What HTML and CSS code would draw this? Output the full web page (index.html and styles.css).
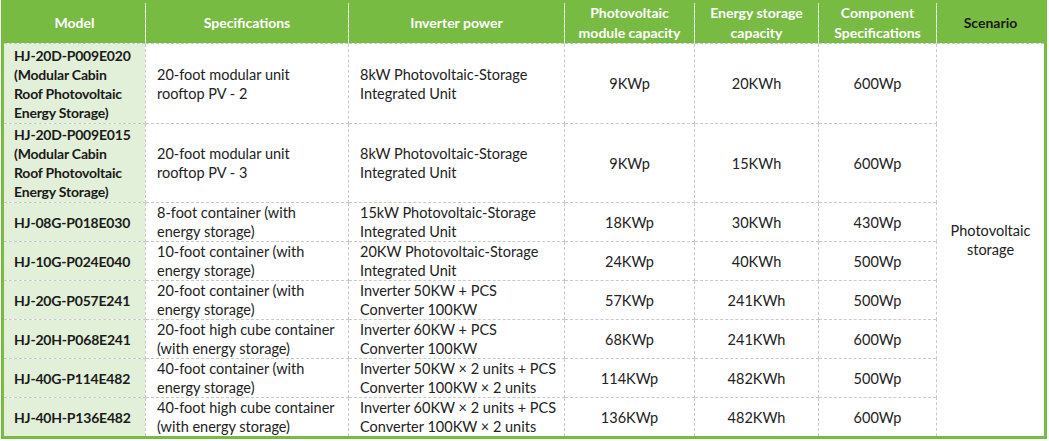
FILE: index.html
```html
<!DOCTYPE html>
<html>
<head>
<meta charset="utf-8">
<link rel="stylesheet" href="styles.css">
</head>
<body>
<table class="spec">
  <colgroup>
    <col class="c-model">
    <col class="c-spec">
    <col class="c-inv">
    <col class="c-pv">
    <col class="c-es">
    <col class="c-comp">
    <col class="c-scen">
  </colgroup>
  <thead>
    <tr class="head">
      <th>Model</th>
      <th>Specifications</th>
      <th>Inverter power</th>
      <th>Photovoltaic<br>module capacity</th>
      <th>Energy storage<br>capacity</th>
      <th>Component<br>Specifications</th>
      <th class="scen-h">Scenario</th>
    </tr>
  </thead>
  <tbody>
    <tr class="tall">
      <td class="model">HJ-20D-P009E020<br>(Modular Cabin<br>Roof Photovoltaic<br>Energy Storage)</td>
      <td class="left">20-foot modular unit<br>rooftop PV - 2</td>
      <td class="left">8kW Photovoltaic-Storage<br>Integrated Unit</td>
      <td>9KWp</td>
      <td>20KWh</td>
      <td>600Wp</td>
      <td class="scen" rowspan="8">Photovoltaic<br>storage</td>
    </tr>
    <tr class="tall2">
      <td class="model">HJ-20D-P009E015<br>(Modular Cabin<br>Roof Photovoltaic<br>Energy Storage)</td>
      <td class="left">20-foot modular unit<br>rooftop PV - 3</td>
      <td class="left">8kW Photovoltaic-Storage<br>Integrated Unit</td>
      <td>9KWp</td>
      <td>15KWh</td>
      <td>600Wp</td>
    </tr>
    <tr class="row">
      <td class="model">HJ-08G-P018E030</td>
      <td class="left">8-foot container (with<br>energy storage)</td>
      <td class="left">15kW Photovoltaic-Storage<br>Integrated Unit</td>
      <td>18KWp</td>
      <td>30KWh</td>
      <td>430Wp</td>
    </tr>
    <tr class="row">
      <td class="model">HJ-10G-P024E040</td>
      <td class="left">10-foot container (with<br>energy storage)</td>
      <td class="left">20KW Photovoltaic-Storage<br>Integrated Unit</td>
      <td>24KWp</td>
      <td>40KWh</td>
      <td>500Wp</td>
    </tr>
    <tr class="row short">
      <td class="model">HJ-20G-P057E241</td>
      <td class="left">20-foot container (with<br>energy storage)</td>
      <td class="left">Inverter 50KW + PCS<br>Converter 100KW</td>
      <td>57KWp</td>
      <td>241KWh</td>
      <td>500Wp</td>
    </tr>
    <tr class="row">
      <td class="model">HJ-20H-P068E241</td>
      <td class="left">20-foot high cube container<br>(with energy storage)</td>
      <td class="left">Inverter 60KW + PCS<br>Converter 100KW</td>
      <td>68KWp</td>
      <td>241KWh</td>
      <td>600Wp</td>
    </tr>
    <tr class="row">
      <td class="model">HJ-40G-P114E482</td>
      <td class="left">40-foot container (with<br>energy storage)</td>
      <td class="left">Inverter 50KW × 2 units + PCS<br>Converter 100KW × 2 units</td>
      <td>114KWp</td>
      <td>482KWh</td>
      <td>500Wp</td>
    </tr>
    <tr class="row">
      <td class="model">HJ-40H-P136E482</td>
      <td class="left">40-foot high cube container<br>(with energy storage)</td>
      <td class="left">Inverter 60KW × 2 units + PCS<br>Converter 100KW × 2 units</td>
      <td>136KWp</td>
      <td>482KWh</td>
      <td>600Wp</td>
    </tr>
  </tbody>
</table>
</body>
</html>
```

FILE: styles.css
```css
html, body {
  margin: 0;
  padding: 0;
  background: #ffffff;
}

.spec {
  margin: 0 0 0 1px;
  width: 1046px;
  table-layout: fixed;
  border-collapse: collapse;
  border: 3px solid #78bb43;
  font-family: Lato, "Open Sans", sans-serif;
  font-size: 14.5px;
  line-height: 19px;
  color: #222222;
}

.c-model { width: 143px; }
.c-spec { width: 203px; }
.c-inv { width: 216px; }
.c-pv { width: 130px; }
.c-es { width: 124px; }
.c-comp { width: 118px; }
.c-scen { width: 109px; }

.spec th,
.spec td {
  border: 1px dashed #c9c9c9;
  padding: 0 11px;
  text-align: center;
  vertical-align: middle;
  white-space: nowrap;
  overflow: hidden;
}

.head th {
  height: 40px;
  background: #78bb43;
  color: #ffffff;
  font-size: 14px;
  font-weight: 700;
  line-height: 20px;
  border-top: 3px solid #78bb43;
  border-bottom: 0;
  border-left: 1px dashed #d6e8c8;
  border-right: 1px dashed #d6e8c8;
  padding: 0 4px;
}

.head th:first-child { border-left: 3px solid #78bb43; }
.head th.scen-h {
  color: #1a1a1a;
  border-right: 3px solid #78bb43;
}

.tall td { height: 79px; }
.tall2 td { height: 78px; }
.row td { height: 38px; }
.row.short td { height: 37px; }

.spec td.model {
  background: #e2efd9;
  font-weight: 700;
  text-align: left;
  color: #1a1a1a;
  font-size: 14px;
  padding-left: 10px;
  letter-spacing: -0.2px;
}

.spec td.left {
  text-align: left;
}

.spec td.scen {
  border-right: 3px solid #78bb43;
}
```
